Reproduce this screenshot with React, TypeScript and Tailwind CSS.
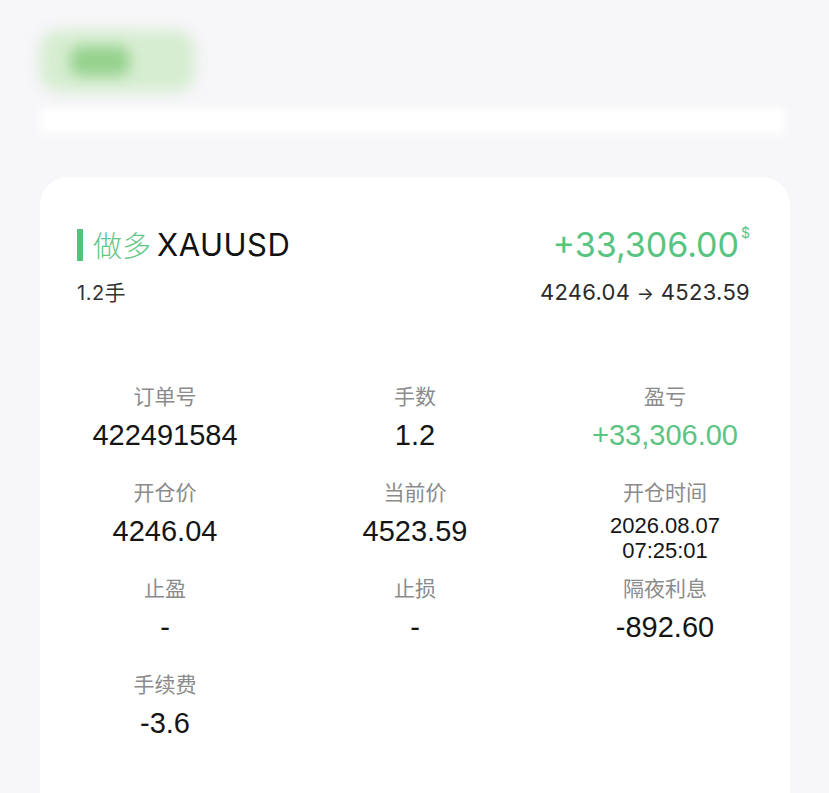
import React from 'react';

const cjk = '"Liberation Sans", "Noto Sans CJK SC", sans-serif';
const geo = 'Inter, "Noto Sans CJK SC", sans-serif';

type Cell = { label: string; value: string | string[]; green?: boolean };

const cells: Cell[] = [
  { label: '订单号', value: '422491584' },
  { label: '手数', value: '1.2' },
  { label: '盈亏', value: '+33,306.00', green: true },
  { label: '开仓价', value: '4246.04' },
  { label: '当前价', value: '4523.59' },
  { label: '开仓时间', value: ['2026.08.07', '07:25:01'] },
  { label: '止盈', value: '-' },
  { label: '止损', value: '-' },
  { label: '隔夜利息', value: '-892.60' },
  { label: '手续费', value: '-3.6' },
];

const App: React.FC = () => {
  return (
    <div className="min-h-screen w-[829px] h-[793px] overflow-hidden bg-[#f7f6f9] pl-[40px] pr-[39px]" style={{ fontFamily: cjk }}>
      {/* blurred top area */}
      <div className="pt-[30px]">
        <div className="w-[155px] h-[62px] rounded-[20px] bg-[#d6edd1] blur-[7px] flex items-center pl-[30px]">
          <div className="w-[60px] h-[30px] rounded-[12px] bg-[#96d28e]" />
        </div>
        <div className="mt-[16px] h-[26px] w-[745px] bg-white blur-[4px]" />
      </div>

      {/* order card */}
      <div className="mt-[43px] h-[700px] bg-white rounded-[28px] pt-[48px]">
        <div className="px-[37px] pr-[40px]">
          <div className="flex items-center justify-between h-[40px]">
            <div className="flex items-center">
              <div className="w-[6px] h-[32px] bg-[#4fc47a] rounded-[1px]" />
              <span className="ml-[10px] text-[29px] text-[#62c787] font-light" style={{ fontFamily: '"Noto Sans CJK SC", sans-serif' }}>做多</span>
              <span className="ml-[6px] text-[31px] text-[#111] tracking-[0.5px]" style={{ fontFamily: geo }}>XAUUSD</span>
            </div>
            <div className="flex items-start text-[#58c482]" style={{ fontFamily: geo }}>
              <span className="text-[34px] leading-[40px]">+33,306.00</span>
              <span className="text-[14px] leading-[14px] ml-[2px] mt-[1px]">$</span>
            </div>
          </div>
          <div className="mt-[14px] flex items-center justify-between h-[26px]">
            <span className="text-[20px] text-[#333] tracking-[0.5px]" style={{ fontFamily: geo }}>
              1.2<span className="text-[21px]" style={{ fontFamily: '"Noto Sans CJK SC", sans-serif' }}>手</span>
            </span>
            <span className="text-[22px] text-[#2a2a2a] tracking-[0.3px]" style={{ fontFamily: geo }}>
              4246.04 <span className="text-[18px]">→</span> 4523.59
            </span>
          </div>
        </div>

        <div className="mt-[78px] grid grid-cols-3 auto-rows-[96px]">
          {cells.map((c) => (
            <div key={c.label} className="flex flex-col items-center">
              <span className="text-[21px] leading-[28px] text-[#8b8b8b]">{c.label}</span>
              {Array.isArray(c.value) ? (
                <div className="mt-[6px] flex flex-col items-center text-[22px] leading-[25px] text-[#151515]">
                  {c.value.map((v) => (
                    <span key={v}>{v}</span>
                  ))}
                </div>
              ) : (
                <span className={`mt-[7px] text-[29px] leading-[34px] ${c.green ? 'text-[#5cc482]' : 'text-[#151515]'}`}>
                  {c.value}
                </span>
              )}
            </div>
          ))}
        </div>
      </div>
    </div>
  );
};

export default App;
